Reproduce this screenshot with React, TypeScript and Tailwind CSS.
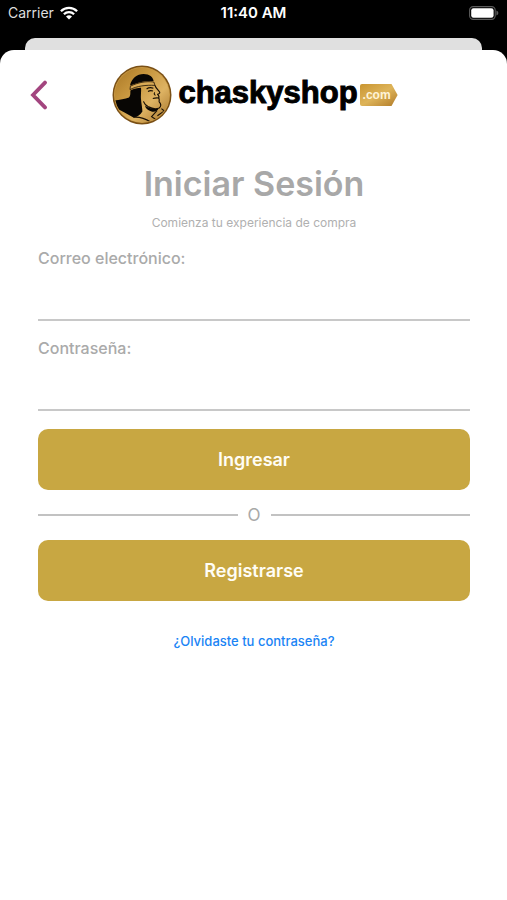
import type { InputHTMLAttributes, ReactNode } from 'react';

interface FieldProps extends InputHTMLAttributes<HTMLInputElement> {
  id: string;
  label: string;
}

interface PrimaryButtonProps {
  type?: 'button' | 'submit';
  children: ReactNode;
}

function WifiIcon() {
  return (
    <svg viewBox="0 0 18 14" className="h-[14px] w-[18px]" aria-hidden>
      <g fill="none" stroke="#fff" strokeWidth="2.3">
        <path d="M0.9 5.2 A11.6 11.6 0 0 1 17.1 5.2" />
        <path d="M3.9 8.3 A7.3 7.3 0 0 1 14.1 8.3" />
      </g>
      <path d="M9 13.6 L6 10.6 A4.3 4.3 0 0 1 12 10.6 Z" fill="#fff" />
    </svg>
  );
}

function BatteryIcon() {
  return (
    <svg viewBox="0 0 30 14" className="h-[14px] w-[30px]" aria-hidden>
      <rect x="0.6" y="0.6" width="25.6" height="12.8" rx="3.6" fill="none" stroke="#5c5c5c" strokeWidth="1.1" />
      <rect x="2.2" y="2.2" width="22.4" height="9.6" rx="2.2" fill="#fff" />
      <path d="M27.4 4.6 Q29.4 5.4 29.4 7 Q29.4 8.6 27.4 9.4 Z" fill="#5c5c5c" />
    </svg>
  );
}

function StatusBar() {
  return (
    <div className="grid h-[38px] grid-cols-3 items-start px-2 pt-1 text-[14px] leading-[18px] text-white">
      <div className="flex items-center gap-[6px]">
        <span className="text-[#dedede]">Carrier</span>
        <WifiIcon />
      </div>
      <span className="text-center text-[15px] font-semibold">11:40 AM</span>
      <div className="flex h-[18px] items-center justify-end">
        <BatteryIcon />
      </div>
    </div>
  );
}

function ChaskiEmblem() {
  return (
    <svg viewBox="0 0 60 60" className="h-[60px] w-[60px] shrink-0" aria-hidden>
      <defs>
        <linearGradient id="coin" x1="0" y1="0" x2="1" y2="1">
          <stop offset="0" stopColor="#a87624" />
          <stop offset="0.35" stopColor="#c8973f" />
          <stop offset="0.65" stopColor="#deb363" />
          <stop offset="1" stopColor="#a3722a" />
        </linearGradient>
        <clipPath id="coin-clip">
          <circle cx="30" cy="30" r="27.2" />
        </clipPath>
      </defs>
      <circle cx="30" cy="30" r="29.5" fill="#7a5016" />
      <circle cx="30" cy="30" r="28" fill="#cb9b45" />
      <circle cx="30" cy="30" r="27.2" fill="url(#coin)" />
      <g clipPath="url(#coin-clip)">
        {/* cap */}
        <path d="M18 20.6 C19.6 13.4 25 9 31.6 9 C37.6 9 41 12 41.6 16 C33 15.4 26 17 18 20.6 Z" fill="#080604" />
        {/* hair and shoulder */}
        <path
          d="M18.4 25.4 C22 23.6 25.6 22.8 29 22.8 C29.4 27 28.6 30 29 34 C29.2 38 30.4 43 30.4 46.6 C28 50.6 24 52.8 21.4 52.4 C15 49 9 45.6 3 42.6 L1 35.6 C7 35.2 13 34.2 17 32.6 C18.8 30.6 18.2 28 18.4 25.4 Z"
          fill="#080604"
        />
        {/* headband */}
        <path
          d="M18 24.6 L18.4 21.2 C26 17.4 34 16 41.8 17 L43 20.4 C34 19.8 25 21 18 24.6 Z"
          fill="#d9aa55"
          stroke="#1a1005"
          strokeWidth="0.8"
        />
        {/* profile */}
        <path
          d="M43 20.4 C43.4 22.6 46 24.8 47.6 27 C48.2 28.2 47 28.8 45.6 29.4 C46.8 30.6 47.6 31.6 46.6 33 C48 34.2 46.8 35.6 47.2 36.8 C49.2 39 49.4 41.4 47.2 43 C43.6 44.6 39.4 43.4 36 41.6 C33.6 40.2 32.2 38.6 31.4 36.4"
          fill="none"
          stroke="#1a1005"
          strokeWidth="1.2"
          strokeLinejoin="round"
        />
        {/* brow, eye, nostril and mouth */}
        <path
          d="M34.6 24 Q37.4 21.8 41.4 23.2 M36 26.4 Q38.4 25 41 26 M42.6 27.4 Q41.6 30 43.6 30.2 M40.8 33.6 Q43.6 32.6 46.6 33"
          fill="none"
          stroke="#1a1005"
          strokeWidth="1.1"
        />
        <path d="M33 40.6 C37 43.6 42 44.8 46.6 43.6 C45.4 46.2 42.6 47.2 39.6 46.6 C36 45.6 33.6 43.8 33 40.6 Z" fill="#080604" />
        {/* collar */}
        <path
          d="M21.4 52.2 C28 51.6 34 54 38.6 57 M45 45.6 L39.6 51.6 L44.6 55 M49.4 43.6 L52.4 46 L45.4 50.8"
          fill="none"
          stroke="#1a1005"
          strokeWidth="1.1"
        />
      </g>
    </svg>
  );
}

function Logo() {
  return (
    <div className="flex items-center justify-center">
      <ChaskiEmblem />
      <span className="ml-[6px] pb-1 font-['Liberation_Sans',Arial,sans-serif] text-[31px] leading-[38px] font-bold text-black [-webkit-text-stroke:1px_#000]">
        chaskyshop
      </span>
      <span className="ml-[2px] flex h-[22px] w-[38px] items-center rounded-l-[2px] bg-linear-to-br from-[#c9952f] via-[#deb459] to-[#b07a26] pl-[3px] font-['Liberation_Sans',Arial,sans-serif] text-[12px] leading-[14px] font-bold text-[#fff3d6] [clip-path:polygon(0_0,84%_0,100%_50%,84%_100%,0_100%)]">
        .com
      </span>
    </div>
  );
}

function Field({ id, label, ...inputProps }: FieldProps) {
  return (
    <div className="flex flex-col">
      <label htmlFor={id} className="text-[16px] leading-[20px] font-medium text-[#aaaaaa]">
        {label}
      </label>
      <input
        id={id}
        className="h-[53px] w-full border-b-2 border-[#c8c8c8] bg-transparent text-[16px] text-gray-700 outline-none"
        {...inputProps}
      />
    </div>
  );
}

function PrimaryButton({ type = 'button', children }: PrimaryButtonProps) {
  return (
    <button
      type={type}
      className="h-[61px] w-full rounded-[10px] bg-[#c8a742] text-[18px] leading-[24px] font-semibold text-[#fffdf5]"
    >
      {children}
    </button>
  );
}

export default function App() {
  return (
    <div className="flex min-h-screen flex-col bg-black font-[Inter,sans-serif]">
      <StatusBar />
      <div className="mx-[25px] h-3 rounded-t-[10px] bg-[#e0e0e0]" />

      <main className="flex flex-1 flex-col rounded-t-[14px] bg-white pr-[37px] pl-[38px] pt-[15px] pb-10">
        <header className="grid grid-cols-[16px_1fr_14px] items-center">
          <button type="button" aria-label="Volver" className="-ml-2 h-[30px] w-[18px]">
            <svg viewBox="0 0 18 30" className="h-[30px] w-[18px]" aria-hidden>
              <path d="M15 2.6 L3 15 L15 27.4" fill="none" stroke="#a3457f" strokeWidth="3.8" strokeLinecap="round" />
            </svg>
          </button>
          <Logo />
        </header>

        <h1 className="mt-[37px] text-center text-[34px] leading-[44px] font-semibold text-[#a8a8a8]">
          Iniciar Sesión
        </h1>
        <p className="mt-[9px] text-center text-[12px] leading-[16px] text-[#b0b0b0]">
          Comienza tu experiencia de compra
        </p>

        <form className="mt-[17px] flex flex-col" onSubmit={(e) => e.preventDefault()}>
          <div className="flex flex-col gap-[17px]">
            <Field id="email" label="Correo electrónico:" type="email" autoComplete="email" />
            <Field id="password" label="Contraseña:" type="password" autoComplete="current-password" />
          </div>

          <div className="mt-[18px] flex flex-col">
            <PrimaryButton type="submit">Ingresar</PrimaryButton>
            <div className="flex h-[50px] items-center gap-[10px] text-[17px] leading-[20px] text-[#a8a8a8]">
              <span className="h-[2px] flex-1 bg-[#c2c2c2]" />
              <span>O</span>
              <span className="h-[2px] flex-1 bg-[#c2c2c2]" />
            </div>
            <PrimaryButton>Registrarse</PrimaryButton>
          </div>
        </form>

        <a href="#recuperar" className="mt-[31px] self-center text-[13px] leading-[18px] font-medium text-[#1a84f5]">
          ¿Olvidaste tu contraseña?
        </a>
      </main>
    </div>
  );
}
